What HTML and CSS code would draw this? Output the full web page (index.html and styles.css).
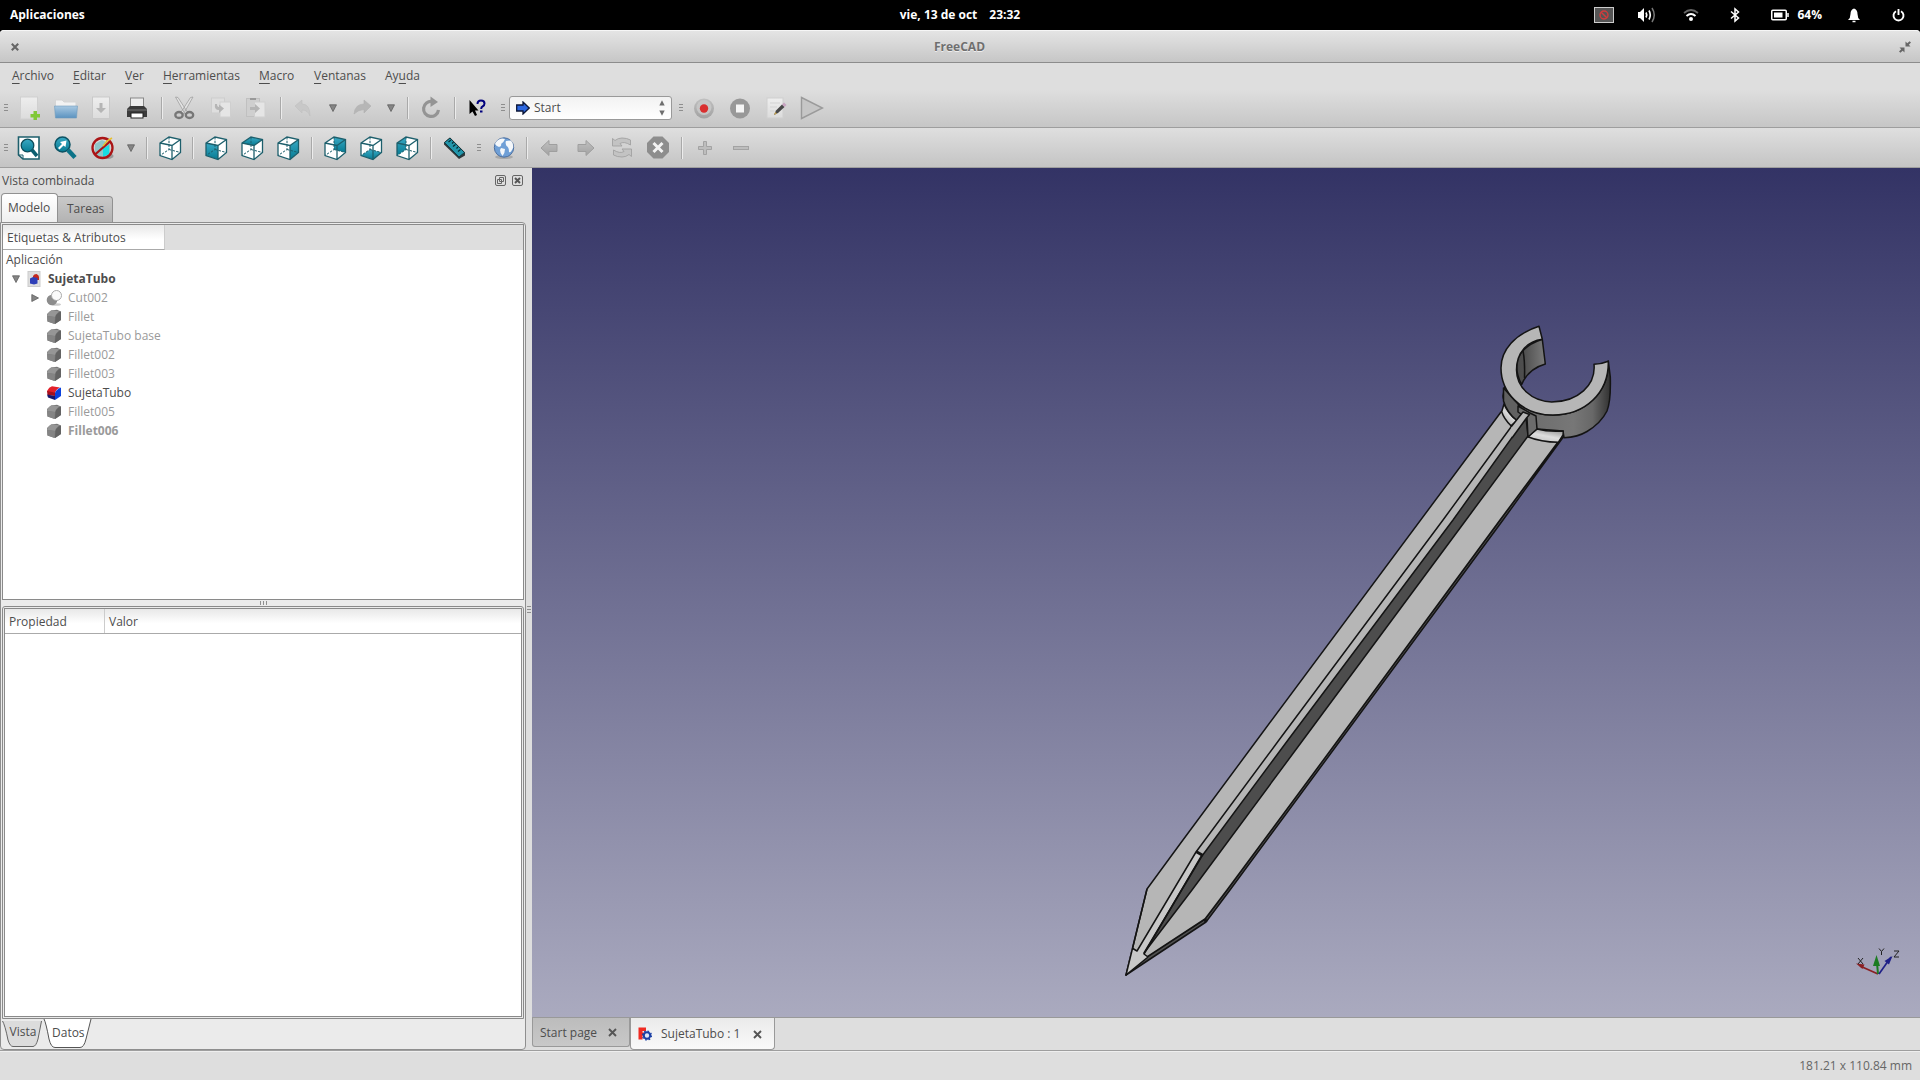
FILE: index.html
```html
<!DOCTYPE html>
<html lang="es">
<head>
<meta charset="utf-8">
<title>FreeCAD</title>
<link rel="stylesheet" href="styles.css">
</head>
<body>
<svg class="defs" width="0" height="0">
  <defs>
    <linearGradient id="teal" x1="0" y1="0" x2="0" y2="1"><stop offset="0" stop-color="#3aa9c4"/><stop offset="1" stop-color="#067b93"/></linearGradient>
    <linearGradient id="folder" x1="0" y1="0" x2="0" y2="1"><stop offset="0" stop-color="#a9c9e2"/><stop offset="1" stop-color="#5b93c0"/></linearGradient>
    <linearGradient id="paper" x1="0" y1="0" x2="0" y2="1"><stop offset="0" stop-color="#eeeeee"/><stop offset="1" stop-color="#dcdcdc"/></linearGradient>
    <linearGradient id="grey" x1="0" y1="0" x2="0" y2="1"><stop offset="0" stop-color="#c0c0c0"/><stop offset="1" stop-color="#a2a2a2"/></linearGradient>
    <symbol id="cube" viewBox="0 0 24 26">
      <path d="M2 8L11 2L22.500 4.500V17.500L14 24.500L2 20.500Z" fill="#fff"/>
    </symbol>
    <symbol id="wire" viewBox="0 0 24 26">
      <path d="M2 8L11 2L22.500 4.500V17.500L14 24.500L2 20.500ZM2 8L14 10.500L22.500 4.500M14 10.500V24.500" fill="none" stroke="#1d5f6c" stroke-width="1.300"/>
      <path d="M11 2V14.500L2 20.500M11 14.500L22.500 17.500" fill="none" stroke="#1d5f6c" stroke-width="1" stroke-dasharray="2.500 1.200"/>
    </symbol>
    <symbol id="solid" viewBox="0 0 16 16">
      <path d="M1 5L5 1.500L11 .8L15 2.500V11L9 15L1.500 12.500Z" fill="#777"/>
      <path d="M1 6Q3 2 6 1.200L14 2.500Q10 4 9 8L1.500 7Z" fill="#969696"/>
      <path d="M1 7L9 8L8.500 15L1.500 12.500Z" fill="#848484"/>
      <path d="M9.500 8Q10 4.500 15 2.500V11L9 15Z" fill="#636363"/>
    </symbol>
    <symbol id="down" viewBox="0 0 8 8"><path d="M.5 .8H7.500L4 7.500Z" fill="#858585" stroke="#606060" stroke-width=".8"/></symbol>
  </defs>
</svg>

<header class="topbar">
  <span class="apps">Aplicaciones</span>
  <span class="clock">vie, 13 de oct<span class="time">23:32</span></span>
  <span class="tray">
    <svg class="t-kb" width="20" height="16" viewBox="0 0 20 16"><rect x=".5" y=".5" width="19" height="15" fill="#555" stroke="#ccc"/><circle cx="10" cy="8" r="4" fill="none" stroke="#d33c3c" stroke-width="1.400"/><path d="M7.200 5.200L12.800 10.800" stroke="#d33c3c" stroke-width="1.400"/></svg>
    <svg class="t-vol" width="20" height="18" viewBox="0 0 20 18"><path d="M1 6H3L7 2V16L3 12H1Z" fill="#fff"/><path d="M9 6.500Q10.500 9 9 11.500M12 4.500Q14.500 9 12 13.500" fill="none" stroke="#fff" stroke-width="1.700"/><path d="M15 2Q19.500 9 15 16" fill="none" stroke="#777" stroke-width="1.500"/></svg>
    <svg class="t-wifi" width="16" height="14" viewBox="0 0 16 14"><path d="M1 5Q8-1 15 5" fill="none" stroke="#666" stroke-width="1.700"/><path d="M3.500 8Q8 4 12.500 8" fill="none" stroke="#fff" stroke-width="2"/><circle cx="8" cy="11" r="2" fill="#fff"/></svg>
    <svg class="t-bt" width="10" height="16" viewBox="0 0 10 16"><path d="M1 4.500L8.500 11L5 14V2L8.500 5L1 11.500" fill="none" stroke="#fff" stroke-width="1.500"/></svg>
    <svg class="t-bat" width="18" height="12" viewBox="0 0 18 12"><rect x=".75" y="1.250" width="14.500" height="9.500" rx="1" fill="none" stroke="#fff" stroke-width="1.500"/><rect x="3" y="3.500" width="8.500" height="5" fill="#fff"/><path d="M17 4V8" stroke="#fff" stroke-width="1.500"/></svg>
    <span class="pct">64%</span>
    <svg class="t-bell" width="12" height="15" viewBox="0 0 12 15"><path d="M6 .5Q9.500 1.500 9.500 6Q9.500 10 12 12H0Q2.500 10 2.500 6Q2.500 1.500 6 .5Z" fill="#fff"/><path d="M4.500 13.500H7.500" stroke="#fff" stroke-width="1.500"/></svg>
    <svg class="t-pow" width="13" height="14" viewBox="0 0 13 14"><path d="M4 3.200A5 5 0 1 0 9 3.200" fill="none" stroke="#fff" stroke-width="1.900"/><path d="M6.500 1V7" stroke="#fff" stroke-width="1.900"/></svg>
  </span>
</header>

<div class="titlebar">
  <svg width="8" height="8" viewBox="0 0 8 8"><path d="M.8 .8L7.200 7.200M7.200 .8L.8 7.200" stroke="#666" stroke-width="2.100"/></svg>
  <span class="title">FreeCAD</span>
  <svg width="12" height="12" viewBox="0 0 12 12"><path d="M6.500 .5V5.500H11.500L9.800 3.800L12 1.600L10.600 .2L8.300 2.300ZM5.500 11.500V6.500H.5L2.200 8.200L0 10.400L1.400 11.800L3.700 9.700Z" fill="#666"/></svg>
</div>

<nav class="menubar">
  <span class="m1"><u>A</u>rchivo</span><span class="m2"><u>E</u>ditar</span><span class="m3"><u>V</u>er</span><span class="m4"><u>H</u>erramientas</span><span class="m5"><u>M</u>acro</span><span class="m6"><u>V</u>entanas</span><span class="m7">Ay<u>u</u>da</span>
</nav>

<div class="toolbar file-bar">
  <i class="grip"></i>
  <span class="btn"><svg width="24" height="24" viewBox="0 0 24 24"><rect x="2.500" y="1" width="17" height="22" fill="url(#paper)" stroke="#d0d0d0"/><path d="M15.500 15H19V18H22V21.500H19V24H15.500V21.500H12.500V18H15.500Z" fill="#80c837"/></svg></span>
  <span class="btn"><svg width="24" height="24" viewBox="0 0 24 24"><path d="M1.500 4H8L10 6H22V12H1.500Z" fill="#f2f2f2" stroke="#d5d5d5"/><path d="M.5 10H23.500L22.500 22H1.500Z" fill="url(#folder)" stroke="#6f9cbd" stroke-width=".6"/></svg></span>
  <span class="btn"><svg width="24" height="24" viewBox="0 0 24 24"><rect x="2.500" y="1" width="17" height="21.500" fill="url(#paper)" stroke="#c9c9c9"/><path d="M9.500 7H12.500V12H16L11 17L6 12H9.500Z" fill="#b5b5b5"/></svg></span>
  <span class="btn"><svg width="24" height="24" viewBox="0 0 24 24"><rect x="4.500" y="2" width="13" height="11" fill="#eee" stroke="#888"/><path d="M4 10H18L21 13V21H1V13Z" fill="#3b3b3b"/><path d="M1 14H21" stroke="#777"/><rect x="5" y="17" width="12" height="5" fill="#fff" stroke="#222"/></svg></span>
  <i class="sep"></i>
  <span class="btn"><svg width="24" height="24" viewBox="0 0 24 24"><path d="M2.500 1L5 1.500L15 17L12 18ZM20 1L17.500 1.500L7.500 17L10.500 18Z" fill="#e3e3e3" stroke="#a0a0a0" stroke-width=".8"/><ellipse cx="6" cy="19" rx="3.700" ry="3" fill="none" stroke="#777" stroke-width="2.300"/><ellipse cx="16.500" cy="19" rx="3.700" ry="3" fill="none" stroke="#777" stroke-width="2.300"/></svg></span>
  <span class="btn"><svg width="24" height="24" viewBox="0 0 24 24"><rect x="2.500" y="2" width="13" height="15" fill="#dedede" stroke="#cdcdcd"/><rect x="11" y="6" width="10.500" height="15" fill="#e5e5e5" stroke="#cfcfcf"/><path d="M6 8Q5 14 10 14V17L15 12.500L10 8.500V11Q8 11 8 8Z" fill="#b5b5b5"/></svg></span>
  <span class="btn"><svg width="24" height="24" viewBox="0 0 24 24"><rect x="1.500" y="2.500" width="13" height="18" fill="#cfcfcf" stroke="#c0c0c0"/><path d="M5 3H11" stroke="#999" stroke-width="2"/><rect x="9.500" y="6" width="10.500" height="15" fill="#e5e5e5" stroke="#cfcfcf"/><path d="M5 11H10V8L15 12.500L10 17V14H5Z" fill="#b5b5b5"/></svg></span>
  <i class="sep"></i>
  <span class="btn"><svg width="24" height="24" viewBox="0 0 24 24"><path d="M3 10L10 4V8Q18 8 18 20Q16 14 10 14V17Z" fill="#c8c8c8" stroke="#c0c0c0" stroke-width=".6"/></svg></span>
  <span class="drop"><svg width="8" height="8"><use href="#down"/></svg></span>
  <span class="btn"><svg width="24" height="24" viewBox="0 0 24 24"><path d="M21 10L14 4V8Q5 8 4 18Q8 14 14 13.500V17Z" fill="#b6b6b6" stroke="#b0b0b0" stroke-width=".6"/></svg></span>
  <span class="drop"><svg width="8" height="8"><use href="#down"/></svg></span>
  <i class="sep"></i>
  <span class="btn"><svg width="24" height="24" viewBox="0 0 24 24"><path d="M13 5.500A7.500 7.500 0 1 0 19.500 14" fill="none" stroke="#949494" stroke-width="3.200"/><path d="M11.500 .5L19 6L11.500 11Z" fill="#949494"/></svg></span>
  <i class="sep"></i>
  <span class="btn"><svg width="24" height="24" viewBox="0 0 24 24"><path d="M3.500 4V18L6.500 15.500L9 20L11 19L9 14.500H12.500Z" fill="#000"/><path d="M11.500 8Q11.500 4.500 15 4.500Q18.500 4.500 18.500 7.500Q18.500 9.500 16.500 10.500Q15.200 11 15.200 13" fill="none" stroke="#00007d" stroke-width="2"/><path d="M14 14.500H16.500V16.500H14Z" fill="#00007d"/></svg></span>
  <i class="grip wide"></i>
  <div class="combo">
    <svg width="14" height="14" viewBox="0 0 14 14"><path d="M.7 4H7V1L13.200 7L7 13V10H.7Z" fill="#2c67e0" stroke="#0b1638" stroke-width="1.300"/></svg>
    <span>Start</span>
    <svg class="spin" width="6" height="16" viewBox="0 0 6 16"><path d="M.3 5.500L3 .3L5.700 5.500ZM.3 10.500L3 15.700L5.700 10.500Z" fill="#6e6e6e"/></svg>
  </div>
  <i class="grip wide"></i>
  <span class="btn"><svg width="24" height="24" viewBox="0 0 24 24"><circle cx="12" cy="12.500" r="10" fill="url(#grey)"/><circle cx="12" cy="11.500" r="7.500" fill="#c6c6c6"/><circle cx="12" cy="12.500" r="4.200" fill="#d92f2f"/></svg></span>
  <span class="btn"><svg width="24" height="24" viewBox="0 0 24 24"><circle cx="12" cy="12.500" r="10" fill="#989898"/><rect x="8" y="8.500" width="8" height="8" fill="#f5f5f5"/></svg></span>
  <span class="btn"><svg width="24" height="24" viewBox="0 0 24 24"><rect x="3" y="2" width="16" height="20" fill="url(#paper)" stroke="#cfcfcf"/><path d="M6 7H16M6 11H13M6 15H10" stroke="#d3d3d3"/><path d="M10 19L12 14.500L18 8.500L20.500 11L14 17Z" fill="#484848"/><path d="M10 19L11.200 16L13 17.500Z" fill="#c7a34f"/><path d="M18 8.500L20 6.500L22.500 9L20.500 11Z" fill="#c7a3c0"/></svg></span>
  <span class="btn"><svg width="24" height="24" viewBox="0 0 24 24"><path d="M1.500 1.500V22.500L22.500 12Z" fill="#c6c6c6" stroke="#9a9a9a" stroke-width="1.400"/></svg></span>
</div>

<div class="toolbar view-bar">
  <i class="grip"></i>
  <span class="btn"><svg width="24" height="26" viewBox="0 0 24 26"><path d="M1.500 2H22V24H6L1.500 20Z" fill="#fff" stroke="#1d5f6c" stroke-width="1.600"/><path d="M1.500 20H6V24" fill="none" stroke="#1d5f6c"/><circle cx="10.500" cy="10.500" r="6.300" fill="url(#teal)" stroke="#0c4c5a" stroke-width="1.300"/><path d="M15 15L20 21" stroke="#0c5f70" stroke-width="3.600"/></svg></span>
  <span class="btn"><svg width="24" height="26" viewBox="0 0 24 26"><circle cx="9.500" cy="9.500" r="7.500" fill="url(#teal)" stroke="#0c5263" stroke-width="1.500"/><path d="M15 15L22 22.500" stroke="#0c7388" stroke-width="4.500"/><path d="M5 13L9 9L7 7L13.500 5.500L12.500 12L10.500 10.500L6.500 14.500Z" fill="#fff"/></svg></span>
  <span class="btn nudge"><svg width="26" height="26" viewBox="0 0 26 26"><ellipse cx="19" cy="21" rx="5.500" ry="3" fill="#777" opacity=".6"/><path d="M6 9L13 5L21 9V19L13 23L6 19Z" fill="#8fc6c8"/><path d="M14 13L20 10V19L14 22Z" fill="#18dce2"/><circle cx="13.500" cy="13" r="10" fill="none" stroke="#aa1416" stroke-width="2.300"/><path d="M6 19.500L21 6.500" stroke="#aa1416" stroke-width="2.300"/><path d="M14 11L18 6L23 3" fill="none" stroke="#e8bf2d" stroke-width="1.500"/></svg></span>
  <span class="drop nudge"><svg width="8" height="8"><use href="#down"/></svg></span>
  <i class="sep"></i>
  <span class="btn"><svg width="24" height="26"><use href="#cube"/><use href="#wire"/></svg></span>
  <i class="sep slim"></i>
  <span class="btn"><svg width="24" height="26"><use href="#cube"/><path d="M2 8L14 10.500V24.500L2 20.500Z" fill="url(#teal)"/><use href="#wire"/></svg></span>
  <span class="btn"><svg width="24" height="26"><use href="#cube"/><path d="M2 8L11 2L22.500 4.500L14 10.500Z" fill="url(#teal)"/><use href="#wire"/></svg></span>
  <span class="btn"><svg width="24" height="26"><use href="#cube"/><path d="M14 10.500L22.500 4.500V17.500L14 24.500Z" fill="url(#teal)"/><use href="#wire"/></svg></span>
  <i class="sep"></i>
  <span class="btn"><svg width="24" height="26"><use href="#cube"/><path d="M11 2L22.500 4.500V17.500L11 14.500Z" fill="url(#teal)"/><use href="#wire"/></svg></span>
  <span class="btn"><svg width="24" height="26"><use href="#cube"/><path d="M2 20.500L11 14.500L22.500 17.500L14 24.500Z" fill="url(#teal)"/><use href="#wire"/></svg></span>
  <span class="btn"><svg width="24" height="26"><use href="#cube"/><path d="M2 8L11 2V14.500L2 20.500Z" fill="url(#teal)"/><use href="#wire"/></svg></span>
  <i class="sep"></i>
  <span class="btn nudge"><svg width="24" height="26" viewBox="0 0 24 26"><path d="M1 7.500L7 2.500L22 17.500V20.500L16 24L1 9.500Z" fill="#30393b"/><path d="M1.500 7.500L7 3L21.500 17.500L16 22Z" fill="#2296ab" stroke="#173a42"/><path d="M8 5L5.500 7M10.500 7L9 8.500M12.500 9.500L10 11.500M15 12L13.500 13.500M17.500 14.500L15 16.500" stroke="#062b33" stroke-width="1.200"/></svg></span>
  <i class="grip wide"></i>
  <span class="btn"><svg width="24" height="26" viewBox="0 0 24 26"><ellipse cx="12" cy="22" rx="9" ry="2" fill="#a9a9a9"/><circle cx="12" cy="12.500" r="9.700" fill="#6f9fd6" stroke="#4d6f9f"/><path d="M4 7Q8 2 13 4Q12 7 9 9Q10 11 7 12Q4 11 3 9ZM9 13L13 14Q13 18 10.500 21Q8 18 8 15ZM14 6L19 5.500Q22 9 21 13Q19 18 17 17Q17 12 14.500 11Q13 8 14 6Z" fill="#f4f7fa"/></svg></span>
  <i class="sep slim"></i>
  <span class="btn"><svg width="24" height="26" viewBox="0 0 24 26"><path d="M3 13L11 5.500V9.500H19V16.500H11V20.500Z" fill="url(#grey)" stroke="#9f9f9f"/></svg></span>
  <span class="btn"><svg width="24" height="26" viewBox="0 0 24 26"><path d="M20 13L12 5.500V9.500H4V16.500H12V20.500Z" fill="url(#grey)" stroke="#9f9f9f"/></svg></span>
  <span class="btn"><svg width="24" height="26" viewBox="0 0 24 26"><path d="M2.500 11V3.500L5 5.500Q8 3 12 3Q17 3 20.500 5V10Q14 6 10 8.500L12 11ZM21.500 14V21.500L19 19.500Q16 22 12 22Q7 22 3.500 20V15Q10 19 14 16.500L12 14Z" fill="#c3c3c3" stroke="#a2a2a2" stroke-width=".9"/></svg></span>
  <span class="btn"><svg width="24" height="26" viewBox="0 0 24 26"><path d="M7.500 1.500H16.500L23 8V17L16.500 23.500H7.500L1 17V8Z" fill="#8d8d8d"/><path d="M7.500 8L16.500 17M16.500 8L7.500 17" stroke="#f2f2f2" stroke-width="3"/></svg></span>
  <i class="sep"></i>
  <span class="btn"><svg width="24" height="26" viewBox="0 0 24 26"><path d="M10.500 6.500H13.500V11.500H18.500V14.500H13.500V19.500H10.500V14.500H5.500V11.500H10.500Z" fill="#bdbdbd" stroke="#a3a3a3"/></svg></span>
  <span class="btn"><svg width="24" height="26" viewBox="0 0 24 26"><rect x="4.500" y="11.500" width="15" height="3" fill="#bdbdbd" stroke="#a3a3a3"/></svg></span>
</div>

<main class="work">
  <aside class="dock">
    <div class="dock-title">
      <span>Vista combinada</span>
      <svg width="11" height="11" viewBox="0 0 11 11"><rect x=".5" y=".5" width="10" height="10" rx="1.500" fill="none" stroke="#666"/><path d="M4.500 2.500H8.500V6.500H4.500ZM2.500 4.500H6.500V8.500H2.500Z" fill="none" stroke="#666"/></svg>
      <svg width="11" height="11" viewBox="0 0 11 11"><rect x=".5" y=".5" width="10" height="10" rx="1.500" fill="none" stroke="#666"/><path d="M3 3L8 8M8 3L3 8" stroke="#555" stroke-width="1.900"/></svg>
    </div>
    <div class="tabs"><span class="tab on">Modelo</span><span class="tab">Tareas</span></div>
    <div class="pane">
      <section class="tree">
        <div class="tree-head"><span>Etiquetas &amp; Atributos</span></div>
        <div class="row root">Aplicación</div>
        <div class="row doc"><svg class="tw" width="8" height="8"><use href="#down"/></svg><svg class="ic" width="14" height="16" viewBox="0 0 14 16"><rect x="1" y=".5" width="12" height="15" fill="#dedede" stroke="#ccc"/><path d="M6 5Q7 3 9.500 3Q12 4 12 6V9H6Z" fill="#c6281c"/><path d="M3 7.500L6 6L10.500 7V12.500L7 13.500L3 12.500Z" fill="#2e3fb8"/></svg><b>SujetaTubo</b></div>
        <div class="row item cut off"><svg class="tw side" width="8" height="8"><use href="#down"/></svg><svg class="ic" width="16" height="16" viewBox="0 0 16 16"><ellipse cx="10" cy="14.500" rx="5" ry="1.300" fill="#ccc"/><circle cx="6" cy="10" r="5.300" fill="#8c8c8c"/><circle cx="10.500" cy="5.500" r="5" fill="#fafafa" stroke="#aaa"/></svg>Cut002</div>
        <div class="row item off"><svg class="ic" width="16" height="16"><use href="#solid"/></svg>Fillet</div>
        <div class="row item off"><svg class="ic" width="16" height="16"><use href="#solid"/></svg>SujetaTubo base</div>
        <div class="row item off"><svg class="ic" width="16" height="16"><use href="#solid"/></svg>Fillet002</div>
        <div class="row item off"><svg class="ic" width="16" height="16"><use href="#solid"/></svg>Fillet003</div>
        <div class="row item"><svg class="ic" width="16" height="16" viewBox="0 0 16 16"><path d="M1 6Q3 2 6 1.200L14 2.500Q10 4 9 8L1.500 7Z" fill="#e3202a"/><path d="M1 6L9 7.500V11L1.500 10Z" fill="#a5101d"/><path d="M1 9.500L9 11V15L2 12.500Z" fill="#17176d"/><path d="M9 8Q10 4.500 15 2.500V11L9 15Z" fill="#0b42dd"/></svg>SujetaTubo</div>
        <div class="row item off"><svg class="ic" width="16" height="16"><use href="#solid"/></svg>Fillet005</div>
        <div class="row item off"><svg class="ic" width="16" height="16"><use href="#solid"/></svg><b>Fillet006</b></div>
      </section>
      <div class="vsplit"><i></i><i></i><i></i></div>
      <section class="props">
        <div class="props-in">
          <div class="props-head"><span class="p-name">Propiedad</span><span class="p-val">Valor</span></div>
        </div>
      </section>
      <svg class="ptabs" width="100" height="30" viewBox="0 0 100 30">
        <path d="M.5 2Q3 4 6 21Q8 27.500 11 27.500H31Q34 27.500 36 20L39.500 2Z" fill="#dcdcdc"/>
        <path d="M.5 2Q3 6 6 21Q8 27.500 11 27.500H31Q34 27.500 36 20L39.500 2" fill="none" stroke="#666"/>
        <path d="M42 0Q44 4 47 20Q49 28.500 53 28.500H78Q82 28.500 84 20L89 0Z" fill="#fff"/>
        <path d="M42 0Q44 4 47 20Q49 28.500 53 28.500H78Q82 28.500 84 20L89 0" fill="none" stroke="#555"/>
        <text x="7.500" y="17">Vista</text><text x="50" y="18">Datos</text>
      </svg>
    </div>
  </aside>
  <div class="hsplit"><i></i><i></i><i></i></div>
  <section class="mdi">
    <svg class="scene" width="1388" height="849" viewBox="532 168 1388 849">
      <defs>
        <linearGradient id="ringside" x1="1503" y1="0" x2="1611" y2="0" gradientUnits="userSpaceOnUse"><stop offset="0" stop-color="#4c4c4c"/><stop offset=".2" stop-color="#6c6c6c"/><stop offset=".65" stop-color="#777"/><stop offset=".83" stop-color="#686868"/><stop offset="1" stop-color="#303030"/></linearGradient>
        <linearGradient id="ringin" x1="1517" y1="0" x2="1546" y2="0" gradientUnits="userSpaceOnUse"><stop offset="0" stop-color="#4b4b4b"/><stop offset=".25" stop-color="#4f4f4f"/><stop offset="1" stop-color="#7d7d7d"/></linearGradient>
        <linearGradient id="fil" x1="1545" y1="428" x2="1542" y2="443" gradientUnits="userSpaceOnUse"><stop offset="0" stop-color="#9a9a9a"/><stop offset=".5" stop-color="#dedede"/><stop offset="1" stop-color="#c4c4c4"/></linearGradient>
        <linearGradient id="fil2" x1="1513" y1="409" x2="1504" y2="419" gradientUnits="userSpaceOnUse"><stop offset="0" stop-color="#777"/><stop offset=".5" stop-color="#dadada"/><stop offset="1" stop-color="#b9b9b9"/></linearGradient>
      </defs>
      <g stroke="#141414" stroke-width="1.500" stroke-linejoin="round">
        <path d="M1558.300 442L1564 436L1503 520L1230 890L1206 922L1126 975L1147 956L1205 919L1227 890L1500 520Z" fill="#505050"/>
        <path d="M1501 412L1257 740L1180 844L1147 889L1126 975L1147 957L1205 919L1227 890L1330 751L1500 520L1558 442L1530 400Z" fill="#b6b6b6"/>
        <path d="M1137 951L1196 852L1202 855L1144 954L1148 957L1126 975L1132 948Z" fill="#c8c8c8" stroke="none"/>
        <path d="M1526 418L1453 520L1288 740L1202 856L1144 953L1192 890L1303 740L1466 520L1528 436Z" fill="#4d4d4d"/>
        <path d="M1147 889L1126 975L1148 957M1132 948L1137 951L1196 852L1279 740L1443 520L1511 427L1523 412M1202 855L1144 954L1148 957" fill="none"/>
        <path d="M1196 851.500L1203 855.500" stroke-width="3"/>
        <path d="M1205 919L1206 922" stroke-width="3"/>
        <path d="M1505 386L1503 396Q1503 404 1518 413L1532 421L1537 429L1563 431L1564 437.700Q1578 437 1587 431.500Q1601 423 1607 411Q1611 401 1610.300 377L1608.300 361C1609 393 1585 415 1553 415C1530 415 1512 402 1505 386Z" fill="url(#ringside)"/>
        <path d="M1504 404L1501.700 411.700Q1504 419 1511 425.700L1517 420.500Q1509 415 1504 404Z" fill="url(#fil2)"/>
        <path d="M1503.500 388L1503.500 401Q1507 413 1517 420.500L1523 412L1518 404Z" fill="#616161"/>
        <path d="M1537 429Q1548 432 1563.300 431L1563 435L1558.300 442.300Q1541 442 1527.700 436.700Z" fill="url(#fil)"/>
        <path d="M1518 406L1530 413L1536 416L1537 429L1528 437L1527 418L1518 412Z" fill="#6c6c6c"/>
        <path d="M1511 427L1523 412L1529.500 414.500L1526.500 418L1512 438" fill="#b6b6b6"/>
        <path d="M1542.300 339.300L1545.300 364Q1528 369 1521.700 384.500Q1515 373 1517.300 360Q1522 346 1542.300 339.300Z" fill="url(#ringin)"/>
        <path d="M1523 351Q1525 360 1524.500 378" fill="none"/>
        <path d="M1539 326.300C1515 334 1501 350 1501 368C1501 391 1520 415 1553 415C1585 415 1609 393 1608.300 361.300Q1602 364 1594 364.300C1596 385 1578 402 1551.700 402C1531 401 1516.500 387 1516.500 370C1516.500 352 1528 341 1542.300 339.300Z" fill="#b6b6b6"/>
      </g>
      <path d="M1878 974L1860 966" stroke="#8a2024" stroke-width="1.700"/><path d="M1856 963.500L1864.500 964.500L1862.500 969Z" fill="#8a2024"/>
      <path d="M1878 974L1877 963" stroke="#1c7c22" stroke-width="2"/><path d="M1876.500 955L1880 966H1873Z" fill="#1c7c22"/>
      <path d="M1879 974L1891 957" stroke="#1f2087" stroke-width="1.700"/><path d="M1892.500 956L1884.500 961L1889 964.500Z" fill="#1f2087"/>
      <path d="M1858 958L1863 964M1863 958L1858 964M1879 948.500L1881.500 951.500L1884 948.500M1881.500 951.500V955M1894 951H1899L1894 957H1899" fill="none" stroke="#222"/>
    </svg>
    <div class="doc-tabs">
      <div class="dt start"><span>Start page</span><svg width="9" height="9" viewBox="0 0 9 9"><path d="M1 1L8 8M8 1L1 8" stroke="#555" stroke-width="1.900"/></svg></div>
      <div class="dt active"><svg width="14" height="14" viewBox="0 0 14 14"><path d="M.5 .5H8V4H4.500V5.500H6V8.500H4.500V12.500H.5Z" fill="#f02b22"/><circle cx="9" cy="8.500" r="3.200" fill="#dfe6f5" stroke="#1b3fa5" stroke-width="2"/><circle cx="9" cy="8.500" r="4.500" fill="none" stroke="#1b3fa5" stroke-width="1.200" stroke-dasharray="1.700 1.830"/></svg><span>SujetaTubo : 1</span><svg width="9" height="9" viewBox="0 0 9 9"><path d="M1 1L8 8M8 1L1 8" stroke="#555" stroke-width="1.900"/></svg></div>
    </div>
  </section>
</main>
<footer class="status">181.21 x 110.84 mm</footer>
</body>
</html>
```
FILE: styles.css
```css
* { box-sizing: border-box; }
body {
  margin: 0;
  width: 1920px;
  height: 1080px;
  overflow: hidden;
  display: flex;
  flex-direction: column;
  background: #dedede;
  color: #4d4d4d;
  font: 12px/18px "Open Sans", "Noto Sans", sans-serif;
}
svg { display: block; flex: none; }
.defs { position: absolute; }

.topbar {
  height: 30px;
  flex: none;
  display: grid;
  grid-template-columns: 1fr auto 1fr;
  align-items: center;
  padding: 0 15px 0 10px;
  background: #000;
  color: #fff;
  font-weight: 700;
}
.clock { padding-left: 5px; }
.time { margin-left: 12px; }
.tray { display: flex; align-items: center; justify-content: flex-end; }
.t-vol { margin-left: 23px; }
.t-wifi { margin-left: 26px; }
.t-bt { margin-left: 31px; }
.t-bat { margin-left: 31px; }
.pct { margin-left: 8px; }
.t-bell { margin-left: 26px; }
.t-pow { margin-left: 32px; }

.titlebar {
  height: 33px;
  flex: none;
  display: flex;
  align-items: center;
  justify-content: space-between;
  padding: 0 9px 0 11px;
  background: linear-gradient(#e4e4e4, #c6c6c6);
  border-top: 1px solid #f6f6f6;
  border-bottom: 1px solid #8c8c8c;
  border-radius: 4px 4px 0 0;
  box-shadow: 0 -4px 0 #000;
}
.title { padding-left: 1px; font-weight: 700; color: #6f6f6f; text-shadow: 0 1px #eee; }

.menubar { height: 27px; flex: none; padding: 4px 0 0 12px; display: flex; }
.menubar u { text-underline-offset: 3px; text-decoration-thickness: 1px; }
.m1 { width: 61px; }
.m2 { width: 52px; }
.m3 { width: 38px; }
.m4 { width: 96px; }
.m5 { width: 55px; }
.m6 { width: 71px; }

.toolbar { flex: none; display: flex; align-items: center; }
.file-bar { height: 38px; padding-bottom: 2px; background: linear-gradient(#dedede, #c6c6c6); border-bottom: 1px solid #9e9e9e; }
.view-bar { height: 40px; background: linear-gradient(#dfdfdf, #c4c4c4); border-bottom: 1px solid #9e9e9e; }
.btn { width: 36px; display: flex; justify-content: center; }
.drop { width: 22px; display: flex; justify-content: center; }
.nudge { padding-left: 2px; }
.sep { width: 11px; height: 22px; background: linear-gradient(90deg, #a9a9a9 50%, #ececec 50%) center / 2px 100% no-repeat; }
.sep.slim { width: 10px; }
.grip { width: 12px; height: 8px; background: repeating-linear-gradient(#8e8e8e 0 1px, transparent 1px 3px) 4px 0 / 4px 7px no-repeat; }
.view-bar .grip { width: 11px; }
.grip.wide { width: 13px; background-position: 5px 0; }
.view-bar .grip.wide { width: 14px; }
.combo {
  width: 163px;
  height: 24px;
  display: flex;
  align-items: center;
  padding: 0 6px;
  gap: 4px;
  background: linear-gradient(#f2f2f2, #fff);
  border: 1px solid #999;
  border-radius: 3px;
}
.combo + .grip.wide { width: 14px; background-position: 7px 0; }
.spin { margin-left: auto; }

.work { flex: none; height: 882px; display: flex; }
.dock { width: 526px; display: flex; flex-direction: column; }
.dock-title { height: 25px; display: flex; align-items: center; gap: 6px; padding: 0 3px 0 2px; }
.dock-title span { flex: 1; }
.tabs { height: 29px; display: flex; align-items: flex-end; padding-left: 1px; }
.tab {
  height: 26px;
  width: 55px;
  padding: 3px 0 0 9px;
  border: 1px solid #919191;
  border-bottom: 0;
  border-left: 0;
  border-radius: 0 4px 0 0;
  background: linear-gradient(#c9c9c9, #b3b3b3);
}
.tab.on { height: 29px; width: 57px; padding: 5px 0 0 6px; border-left: 1px solid #919191; border-radius: 4px 4px 0 0; background: linear-gradient(#fff, #efefef); }
.pane {
  flex: 1;
  display: flex;
  flex-direction: column;
  padding: 1px 1px 0;
  background: #ebebeb;
  border: 1px solid #8e8e8e;
  border-radius: 0 4px 4px 4px;
}
.tree { height: 376px; flex: none; border: 1px solid #8a8a8a; background: #fff; }
.tree-head { height: 25px; background: #dedede; }
.tree-head span { display: block; width: 162px; height: 25px; padding: 4px 0 0 4px; background: linear-gradient(#e8e8e8, #fff 60%); border-right: 1px solid #ccc; border-bottom: 1px solid #aaa; }
.row { height: 19px; display: flex; align-items: center; }
.root { padding-left: 3px; }
.doc { padding-left: 9px; }
.doc .ic { margin: 0 7px 0 7px; }
.item { padding-left: 43px; }
.item .ic { margin-right: 6px; }
.cut { padding-left: 28px; }
.side { transform: rotate(-90deg); margin-right: 7px; }
.off { color: #9a9a9a; }
.vsplit { height: 6px; flex: none; display: flex; gap: 2px; justify-content: center; align-items: center; }
.vsplit i { width: 1px; height: 4px; background: #8f8f8f; }
.props { height: 413px; flex: none; padding: 1px; border: 1px solid #8a8a8a; border-radius: 3px 3px 0 0; }
.props-in { height: 100%; border: 1px solid #8a8a8a; background: #fff; }
.props-head { height: 25px; display: flex; background: linear-gradient(#e8e8e8, #fff 60%); border-bottom: 1px solid #aaa; }
.props-head span { padding: 4px 0 0 4px; }
.p-name { width: 100px; border-right: 1px solid #ccc; }
.ptabs text { font: 12px "Open Sans", "Noto Sans", sans-serif; fill: #4d4d4d; }

.hsplit { width: 6px; display: flex; flex-direction: column; gap: 2px; align-items: center; justify-content: center; }
.hsplit i { width: 4px; height: 1px; background: #8f8f8f; }
.mdi { width: 1388px; }
.scene { background: linear-gradient(#333365, #aaaabf); }
.doc-tabs { display: flex; align-items: flex-start; border-top: 1px solid #999; height: 32px; }
.dt { display: flex; align-items: center; border: 1px solid #999; border-top: 0; }
.dt svg:last-child { margin-left: auto; }
.start { width: 98px; height: 29px; padding: 1px 12px 0 7px; background: linear-gradient(#bcbcbc, #c8c8c8); border-radius: 0 0 3px 3px; }
.active { width: 145px; height: 32px; padding: 1px 12px 0 7px; gap: 9px; background: linear-gradient(#eaeaea, #fafafa); border-radius: 0 0 4px 4px; }

.status { flex: 1; border-top: 1px solid #9e9e9e; box-shadow: inset 0 1px #eee; padding: 6px 8px 0 0; text-align: right; color: #666; }
```
